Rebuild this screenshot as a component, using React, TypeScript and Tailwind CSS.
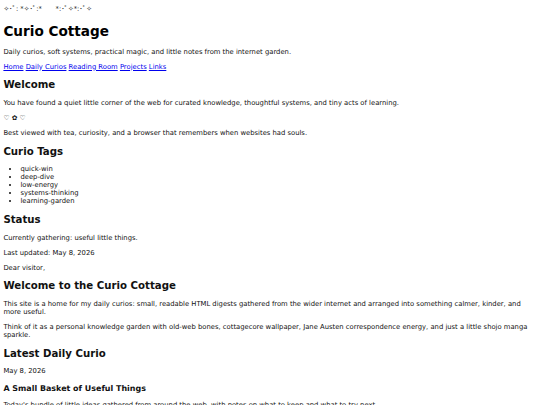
import React from "react";

const P = ({ children }: { children: React.ReactNode }) => (
  <p className="my-[7px]">{children}</p>
);
const H2 = ({ children }: { children: React.ReactNode }) => (
  <h2 className="my-[8.7px] text-[10.2px] font-bold leading-[normal]">{children}</h2>
);

export default function App() {
  return (
    <div className="min-h-[405px] bg-white p-[3.4px] font-['DejaVu_Sans','Noto_Sans_CJK_JP',sans-serif] text-[6.8px] leading-[normal] text-[#111]">
      <div>✧･ﾟ: *✧･ﾟ:*　　*:･ﾟ✧*:･ﾟ✧</div>
      <h1 className="my-[9.11px] text-[13.6px] font-bold leading-[normal] text-black">Curio Cottage</h1>
      <P>Daily curios, soft systems, practical magic, and little notes from the internet garden.</P>
      <nav className="text-[#0000ee]">
        <a href="#" className="underline">Home</a>{" "}
        <a href="#" className="underline">Daily Curios</a>{" "}
        <a href="#" className="underline">Reading Room</a>{" "}
        <a href="#" className="underline">Projects</a>{" "}
        <a href="#" className="underline">Links</a>
      </nav>
      <H2>Welcome</H2>
      <P>You have found a quiet little corner of the web for curated knowledge, thoughtful systems, and tiny acts of learning.</P>
      <P>♡ ✿ ♡</P>
      <P>Best viewed with tea, curiosity, and a browser that remembers when websites had souls.</P>
      <H2>Curio Tags</H2>
      <ul className="my-[7px] list-disc pl-[17px]">
        <li>quick-win</li>
        <li>deep-dive</li>
        <li>low-energy</li>
        <li>systems-thinking</li>
        <li>learning-garden</li>
      </ul>
      <H2>Status</H2>
      <P>Currently gathering: useful little things.</P>
      <P>Last updated: May 8, 2026</P>
      <P>Dear visitor,</P>
      <H2>Welcome to the Curio Cottage</H2>
      <P>This site is a home for my daily curios: small, readable HTML digests gathered from the wider internet and arranged into something calmer, kinder, and more useful.</P>
      <P>Think of it as a personal knowledge garden with old-web bones, cottagecore wallpaper, Jane Austen correspondence energy, and just a little shojo manga sparkle.</P>
      <H2>Latest Daily Curio</H2>
      <P>May 8, 2026</P>
      <h3 className="my-[8.5px] text-[7.96px] font-bold leading-[normal]">A Small Basket of Useful Things</h3>
      <P>Today's bundle of little ideas gathered from around the web, with notes on what to keep and what to try next.</P>
    </div>
  );
}
